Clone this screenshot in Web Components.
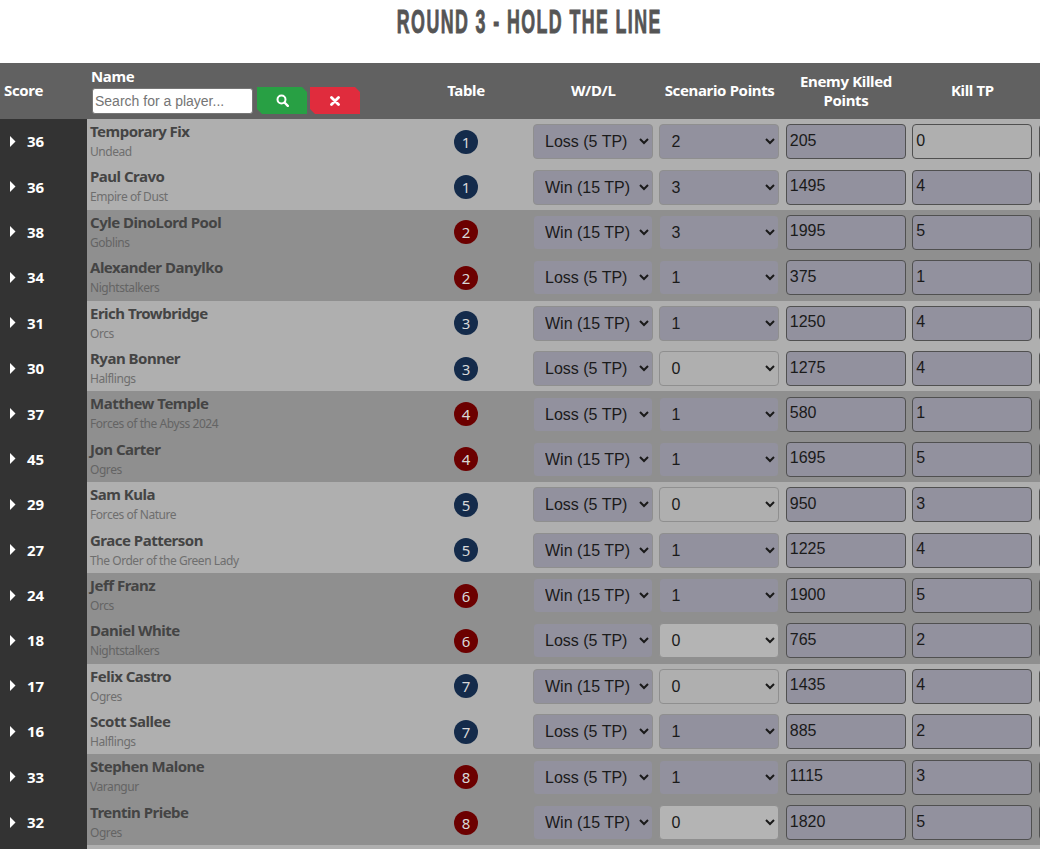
<!DOCTYPE html>
<html>
<head>
<meta charset="utf-8">
<title>Round 3 - Hold the Line</title>
<style>
  html, body { margin: 0; height: 849px; overflow: hidden; background: #fff; }
  body { --cols: 87px 315px 128px 126.4px 126.4px 126.4px 126.4px 22.4px; font-family: "Noto Sans", sans-serif; }
</style>
</head>
<body>
<round-page>
  <round-title>ROUND 3 - HOLD THE LINE</round-title>
  <standings-head></standings-head>
  <player-row score="36" name="Temporary Fix" faction="Undead" table="1" result="Loss (5 TP)" scenario="2" killed="205" tp="0"></player-row>
  <player-row score="36" name="Paul Cravo" faction="Empire of Dust" table="1" result="Win (15 TP)" scenario="3" killed="1495" tp="4"></player-row>
  <player-row score="38" name="Cyle DinoLord Pool" faction="Goblins" table="2" result="Win (15 TP)" scenario="3" killed="1995" tp="5"></player-row>
  <player-row score="34" name="Alexander Danylko" faction="Nightstalkers" table="2" result="Loss (5 TP)" scenario="1" killed="375" tp="1"></player-row>
  <player-row score="31" name="Erich Trowbridge" faction="Orcs" table="3" result="Win (15 TP)" scenario="1" killed="1250" tp="4"></player-row>
  <player-row score="30" name="Ryan Bonner" faction="Halflings" table="3" result="Loss (5 TP)" scenario="0" killed="1275" tp="4"></player-row>
  <player-row score="37" name="Matthew Temple" faction="Forces of the Abyss 2024" table="4" result="Loss (5 TP)" scenario="1" killed="580" tp="1"></player-row>
  <player-row score="45" name="Jon Carter" faction="Ogres" table="4" result="Win (15 TP)" scenario="1" killed="1695" tp="5"></player-row>
  <player-row score="29" name="Sam Kula" faction="Forces of Nature" table="5" result="Loss (5 TP)" scenario="0" killed="950" tp="3"></player-row>
  <player-row score="27" name="Grace Patterson" faction="The Order of the Green Lady" table="5" result="Win (15 TP)" scenario="1" killed="1225" tp="4"></player-row>
  <player-row score="24" name="Jeff Franz" faction="Orcs" table="6" result="Win (15 TP)" scenario="1" killed="1900" tp="5"></player-row>
  <player-row score="18" name="Daniel White" faction="Nightstalkers" table="6" result="Loss (5 TP)" scenario="0" killed="765" tp="2"></player-row>
  <player-row score="17" name="Felix Castro" faction="Ogres" table="7" result="Win (15 TP)" scenario="0" killed="1435" tp="4"></player-row>
  <player-row score="16" name="Scott Sallee" faction="Halflings" table="7" result="Loss (5 TP)" scenario="1" killed="885" tp="2"></player-row>
  <player-row score="33" name="Stephen Malone" faction="Varangur" table="8" result="Loss (5 TP)" scenario="1" killed="1115" tp="3"></player-row>
  <player-row score="32" name="Trentin Priebe" faction="Ogres" table="8" result="Win (15 TP)" scenario="0" killed="1820" tp="5"></player-row>
  <player-row></player-row>
</round-page>
<script>
class RoundPage extends HTMLElement {
  constructor() {
    super();
    this.attachShadow({ mode: "open" });
    this.shadowRoot.innerHTML = `
      <style>
        :host { display: block; width: 1058px; }
      </style>
      <slot></slot>`;
  }
}

class RoundTitle extends HTMLElement {
  constructor() {
    super();
    this.attachShadow({ mode: "open" });
    this.shadowRoot.innerHTML = `
      <style>
        :host { display: flex; justify-content: center; height: 63px; color: #555; }
        h1 {
          margin: 0;
          padding-top: 2px;
          font: bold 33px/40px "Liberation Sans Narrow", "Liberation Sans", sans-serif;
          white-space: nowrap;
          height: 40px;
          letter-spacing: 2.6px;
          -webkit-text-stroke: 0.9px #555;
          transform: scaleX(0.54);
        }
      </style>
      <h1><slot></slot></h1>`;
  }
}

class StandingsHead extends HTMLElement {
  constructor() {
    super();
    this.attachShadow({ mode: "open" });
    this.shadowRoot.innerHTML = `
      <style>
        :host {
          display: grid;
          grid-template-columns: var(--cols);
          height: 56px;
          background: #616161;
          color: #fff;
          font: bold 15px/19px "Noto Sans", sans-serif;
          letter-spacing: -0.35px;
        }
        .c { display: flex; align-items: center; justify-content: center; text-align: center; padding-bottom: 2px; }
        .two { padding-bottom: 0; }
        .score { justify-content: flex-start; padding-left: 4px; }
        .name { display: block; padding: 4px 0 0 4px; text-align: left; }
        .search { display: flex; align-items: flex-start; gap: 4px; margin-top: 1px; }
        input {
          box-sizing: border-box;
          width: 161px;
          height: 26px;
          margin: 1px 0 0 1px;
          padding: 1px 2px;
          border: 1px solid #777;
          border-radius: 3px;
          letter-spacing: 0;
          font: 14px "Liberation Sans", sans-serif;
        }
        input::placeholder { color: #757575; }
        button {
          display: flex;
          align-items: center;
          justify-content: center;
          width: 50px;
          height: 27px;
          padding: 0;
          border: 0;
          clip-path: polygon(0 0, calc(100% - 5px) 0, 100% 5px, 100% 100%, 5px 100%, 0 calc(100% - 5px));
        }
        .go { background: #28a044; }
        .clear { background: #e02c3d; margin-left: -1px; }
      </style>
      <div class="c score">Score</div>
      <div class="c name">
        <div>Name</div>
        <div class="search">
          <input type="text" placeholder="Search for a player...">
          <button class="go" aria-label="Search">
            <svg width="13" height="13" viewBox="0 0 13 13"><circle cx="5.5" cy="5.5" r="4" fill="none" stroke="#fff" stroke-width="2"/><path d="M8.5 8.5l3.3 3.3" stroke="#fff" stroke-width="2.4" stroke-linecap="round"/></svg>
          </button>
          <button class="clear" aria-label="Clear">
            <svg width="10" height="10" viewBox="0 0 10 10"><path d="M1.5 1.5l7 7M8.5 1.5l-7 7" stroke="#fff" stroke-width="2.8" stroke-linecap="round"/></svg>
          </button>
        </div>
      </div>
      <div class="c">Table</div>
      <div class="c">W/D/L</div>
      <div class="c">Scenario Points</div>
      <div class="c two">Enemy Killed<br>Points</div>
      <div class="c">Kill TP</div>
      <div class="c"></div>`;
  }
}

class TableBadge extends HTMLElement {
  constructor() {
    super();
    this.attachShadow({ mode: "open" });
    this.shadowRoot.innerHTML = `
      <style>
        :host {
          display: flex;
          align-items: center;
          justify-content: center;
          width: 24px;
          height: 24px;
          border-radius: 50%;
          background: var(--badge, #142b4b);
          color: #d8d8d8;
          font: 15px/24px "Noto Sans", sans-serif;
        }
      </style>
      <slot></slot>`;
  }
}

class PlayerRow extends HTMLElement {
  constructor() {
    super();
    this.attachShadow({ mode: "open" });
  }

  connectedCallback() {
    const a = n => this.getAttribute(n) || "";
    const rows = [...this.parentNode.querySelectorAll("player-row")];
    const pair = Math.floor(rows.indexOf(this) / 2);
    const dark = pair % 2 === 1;
    const results = ["Win (15 TP)", "Draw (10 TP)", "Loss (5 TP)"];
    const filled = this.hasAttribute("name");
    this.shadowRoot.innerHTML = `
      <style>
        :host {
          display: grid;
          grid-template-columns: var(--cols);
          height: 45.4px;
          background: ${dark ? "#8f8f8f" : "#afafaf"};
          font-family: "Noto Sans", sans-serif;
          --badge: ${dark ? "#6c0000" : "#142b4b"};
        }
        .score {
          display: flex;
          align-items: center;
          padding: 0 0 1px 10px;
          background: #333;
          color: #fff;
          font-weight: bold;
          font-size: 15px;
        }
        .score svg { margin-right: 11px; }
        .who { padding: 2px 0 0 3px; }
        .name { color: #444; font-weight: bold; font-size: 15px; line-height: 20px; letter-spacing: -0.5px; }
        .faction { color: ${dark ? "#646464" : "#6e6e6e"}; font-size: 12px; line-height: 22px; letter-spacing: -0.44px; }
        .cell { display: flex; align-items: center; padding-left: 3px; overflow: visible; white-space: nowrap; }
        .table { justify-content: center; padding: 0; }
        select, input {
          box-sizing: border-box;
          flex: none;
          width: 120px;
          height: 35px;
          margin: 0;
          border-radius: 4px;
          background-color: #92919e;
          color: #1a1a1a;
          font: 16px "Liberation Sans", sans-serif;
        }
        select { border: 1px solid #8f8f8f; padding: 0 4px 0 7px; }
        input { border: 1px solid #505050; padding: 0 2px 2px 3px; }
        select.zero { background-color: ${dark ? "#b4b4b4" : "#afafaf"}; }
        input.zero { background-color: #afafaf; }
      </style>
      <div class="score">${filled ? `
        <svg width="6" height="11" viewBox="0 0 6 11"><path d="M0 0l5.5 5.5L0 11z" fill="#fff"/></svg>${a("score")}` : ""}</div>
      ${filled ? `
      <div class="who">
        <div class="name">${a("name")}</div>
        <div class="faction">${a("faction")}</div>
      </div>
      <div class="cell table"><table-badge>${a("table")}</table-badge></div>
      <div class="cell"><select>${results.map(r => `<option ${r === a("result") ? "selected" : ""}>${r}</option>`).join("")}</select></div>
      <div class="cell"><select class="${a("scenario") === "0" ? "zero" : ""}">${[0, 1, 2, 3].map(n => `<option ${String(n) === a("scenario") ? "selected" : ""}>${n}</option>`).join("")}</select></div>
      <div class="cell"><input type="text" value="${a("killed")}"></div>
      <div class="cell"><input type="text" class="${a("tp") === "0" ? "zero" : ""}" value="${a("tp")}"></div>
      <div class="cell"><input type="text" value=""></div>` : ""}`;
  }
}

customElements.define("round-page", RoundPage);
customElements.define("round-title", RoundTitle);
customElements.define("standings-head", StandingsHead);
customElements.define("table-badge", TableBadge);
customElements.define("player-row", PlayerRow);
</script>
</body>
</html>
